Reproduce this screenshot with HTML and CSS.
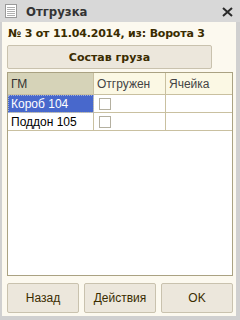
FILE: index.html
```html
<!DOCTYPE html>
<html>
<head>
    <title>Отгрузка</title>
    <link rel="stylesheet" href="styles.css">
</head>
<body>
    <div class="window">
        <div class="titlebar">
            <svg class="doc-icon" width="12" height="14" viewBox="0 0 12 14">
                <rect x="0.5" y="0.5" width="11" height="13" fill="#fff" stroke="#9a9a9a"/>
                <line x1="2" y1="3.5" x2="10" y2="3.5" stroke="#b0b0b0"/>
                <line x1="2" y1="5.5" x2="10" y2="5.5" stroke="#b0b0b0"/>
                <line x1="2" y1="7.5" x2="10" y2="7.5" stroke="#b0b0b0"/>
                <line x1="2" y1="9.5" x2="10" y2="9.5" stroke="#b0b0b0"/>
                <line x1="2" y1="11.5" x2="10" y2="11.5" stroke="#b0b0b0"/>
            </svg>
            <span class="title">Отгрузка</span>
            <svg class="close" width="11" height="10" viewBox="0 0 11 10">
                <path d="M1 1 L10 9 M10 1 L1 9" stroke="#2a2a2a" stroke-width="2"/>
            </svg>
        </div>
        <div class="content">
            <div class="doc-title">№ 3 от 11.04.2014, из: Ворота 3</div>
            <button class="btn btn-wide">Состав груза</button>
            <div class="grid">
                <table>
                    <tr>
                        <th class="col-gm current">ГМ</th>
                        <th class="col-ship">Отгружен</th>
                        <th class="col-cell">Ячейка</th>
                    </tr>
                    <tr>
                        <td class="selected">Короб 104</td>
                        <td><span class="check"></span></td>
                        <td></td>
                    </tr>
                    <tr>
                        <td>Поддон 105</td>
                        <td><span class="check"></span></td>
                        <td></td>
                    </tr>
                </table>
            </div>
            <div class="actions">
                <button class="btn">Назад</button>
                <button class="btn">Действия</button>
                <button class="btn">OK</button>
            </div>
        </div>
    </div>
</body>
</html>
```

FILE: styles.css
```css
body {
    margin: 0;
    font-family: "Liberation Sans", Arial, sans-serif;
}

.window {
    width: 240px;
    height: 320px;
    display: flex;
    flex-direction: column;
    background-color: #d0d0d0;
    box-sizing: border-box;
}

.titlebar {
    height: 22px;
    display: flex;
    align-items: center;
    background-color: #d8d8d8;
    padding: 0 7px 0 5px;
}

.doc-icon {
    margin-right: 9px;
}

.title {
    flex: 1;
    font-family: "DejaVu Sans Condensed", "DejaVu Sans", sans-serif;
    font-stretch: condensed;
    font-weight: bold;
    font-size: 13px;
    color: #333;
}

.close {
    margin-top: 2px;
}

.content {
    flex: 1;
    display: flex;
    flex-direction: column;
    margin: 0 4px 4px 2px;
    padding: 0 1px 3px 5px;
    background-color: #fcf9ef;
}

.doc-title {
    height: 23px;
    line-height: 23px;
    padding-left: 1px;
    font-family: "DejaVu Sans", sans-serif;
    font-weight: bold;
    font-size: 11px;
    letter-spacing: -0.2px;
    color: #3a2c00;
}

.btn {
    font-family: "Liberation Sans", Arial, sans-serif;
    font-size: 12px;
    color: #3a2c00;
    background-color: #ece7dc;
    border: 1px solid #c9c2ae;
    border-radius: 2px;
    padding: 0;
}

.btn-wide {
    width: 205px;
    height: 24px;
    font-family: "DejaVu Sans", sans-serif;
    font-size: 11px;
    font-weight: bold;
}

.grid {
    margin-top: 3px;
    height: 204px;
    width: 226px;
    box-sizing: border-box;
    border: 1px solid #aaa282;
    background-color: #fff;
}

table {
    border-collapse: collapse;
    width: 100%;
    font-size: 12px;
}

th {
    height: 21px;
    padding: 0 0 0 3px;
    text-align: left;
    font-weight: normal;
    color: #444;
    background-color: #fbf8e4;
    border: 1px solid #c9c0a0;
    border-top: none;
}

th:first-child, td:first-child {
    border-left: none;
}

th:last-child, td:last-child {
    border-right: none;
}

th.current {
    background-color: #d6d3b8;
    color: #333;
}

.col-gm {
    width: 82px;
}

.col-ship {
    width: 68px;
}

td {
    height: 17px;
    padding: 0 0 0 3px;
    border: 1px solid #c9c0a0;
    color: #000;
}

td.selected {
    background-color: #4868cc;
    color: #fff;
    outline: 1px dotted #9fb0dc;
    outline-offset: -1px;
}

.check {
    display: block;
    width: 10px;
    height: 10px;
    margin-left: 2px;
    border: 1px solid #b4b0a0;
    background-color: #fff;
}

.actions {
    margin-top: 7px;
    display: flex;
    gap: 5px;
}

.actions .btn {
    width: 72px;
    height: 30px;
}
```
